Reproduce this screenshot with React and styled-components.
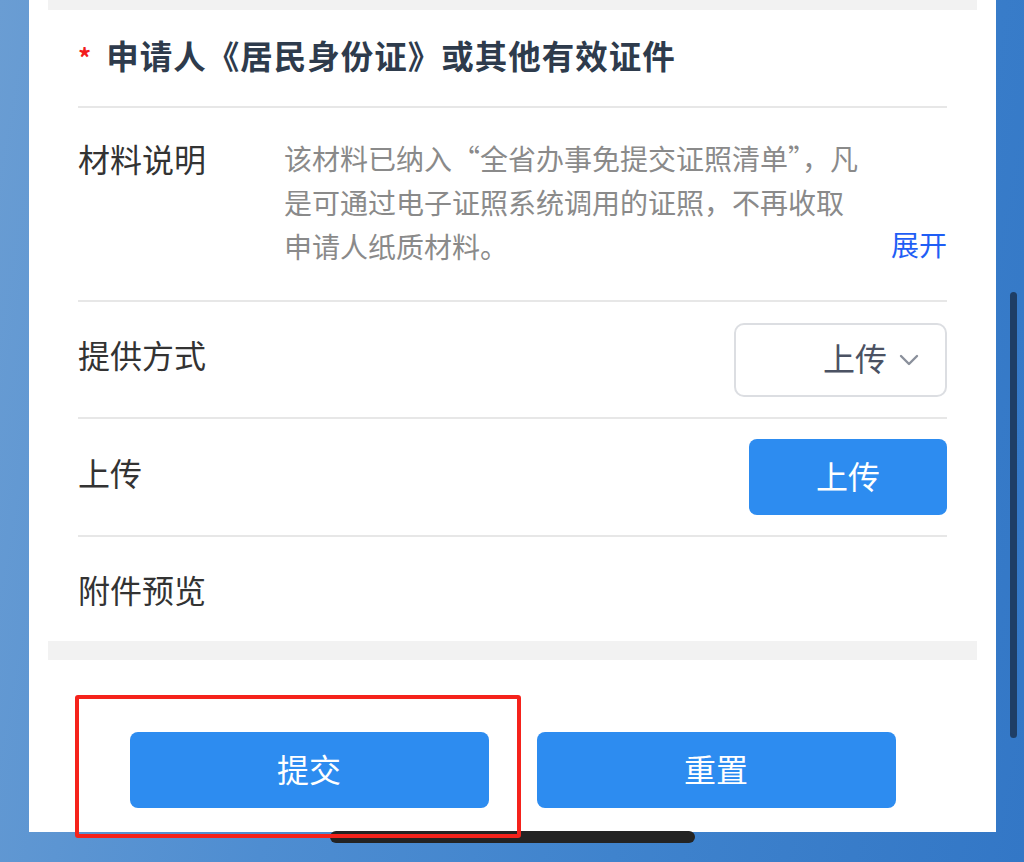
import React from "react";
import styled, { createGlobalStyle } from "styled-components";

const Global = createGlobalStyle`
  html, body { margin: 0; padding: 0; }
  body {
    font-family: "Noto Sans CJK SC", "Noto Sans", sans-serif;
    overflow: hidden;
  }
  * { box-sizing: border-box; }
`;

const Screen = styled.div`
  position: relative;
  width: 1024px;
  height: 862px;
  overflow: hidden;
  padding: 0 28px 0 29px;
  background: linear-gradient(100deg, #6a9dd3 0%, #4e8dd1 35%, #3f83cd 65%, #3377c6 100%);
`;

const Panel = styled.div`
  width: 967px;
  height: 832px;
  background: #ffffff;
  padding: 0 19px;
  display: flex;
  flex-direction: column;
`;

const Band = styled.div`
  height: ${(p) => p.$h}px;
  background: #f2f2f2;
  flex: none;
`;

const Card = styled.div`
  padding: 0 30px;
  display: flex;
  flex-direction: column;
`;

const TitleRow = styled.div`
  height: 96px;
  display: flex;
  align-items: center;
  gap: 15px;
  padding: 0 0 8px 0;
`;

const Star = styled.span`
  color: #f21b1b;
  font-size: 26px;
  font-weight: 700;
  line-height: 1;
  margin-top: 6px;
`;

const Title = styled.h2`
  margin: 0;
  font-size: 32.5px;
  font-weight: 700;
  color: #2e3b4c;
  letter-spacing: 1px;
  line-height: 1.2;
`;

const Divider = styled.div`
  height: 2px;
  background: #e7e7e7;
  flex: none;
`;

const Row = styled.div`
  display: flex;
  align-items: ${(p) => (p.$top ? "flex-start" : "center")};
  justify-content: space-between;
  height: ${(p) => (p.$h ? `${p.$h}px` : "auto")};
  padding: ${(p) => p.$pad || "0"};
`;

const Label = styled.div`
  width: 206px;
  flex: none;
  font-size: 32px;
  line-height: 44px;
  color: #333333;
  margin-top: ${(p) => (p.$lift ? `-${p.$lift * 2}px` : "0")};
`;

const DescWrap = styled.div`
  flex: 1;
  display: flex;
  align-items: flex-end;
  justify-content: space-between;
`;

const Desc = styled.p`
  margin: 0;
  width: 584px;
  font-size: 28px;
  line-height: 44px;
  color: #8a8a8a;
`;

const More = styled.span`
  font-size: 28px;
  line-height: 44px;
  color: #1f5ef5;
  margin-bottom: 2px;
`;

const Select = styled.div`
  width: 213px;
  height: 74px;
  border: 2px solid #dcdee2;
  border-radius: 10px;
  display: flex;
  align-items: center;
  justify-content: flex-end;
  gap: 12px;
  padding: 0 26px 6px 0;
  font-size: 32px;
  color: #4b5263;
`;

const Button = styled.button`
  width: ${(p) => p.$w}px;
  height: 76px;
  border: none;
  border-radius: 8px;
  background: #2d8cf0;
  color: #ffffff;
  font-family: "Noto Sans CJK SC", sans-serif;
  font-size: 32px;
  padding: 0 0 5px 0;
  cursor: pointer;
`;

const Actions = styled.div`
  display: flex;
  justify-content: center;
  gap: 48px;
  padding-top: 72px;
`;

const Highlight = styled.div`
  position: absolute;
  left: 75px;
  top: 695px;
  width: 446px;
  height: 143px;
  border: 4px solid #f5221b;
  border-radius: 3px;
  z-index: 3;
`;

const HomeBar = styled.div`
  position: absolute;
  left: 330px;
  top: 831px;
  width: 365px;
  height: 12px;
  border-radius: 6px;
  background: #232323;
  z-index: 2;
`;

const ScrollThumb = styled.div`
  position: absolute;
  left: 1010px;
  top: 292px;
  width: 7px;
  height: 446px;
  border-radius: 4px;
  background: #1e3e66;
`;

const Chevron = () => (
  <svg width="20" height="12" viewBox="0 0 20 12" fill="none" style={{ marginTop: 6 }}>
    <polyline points="2,2 10,10 18,2" stroke="#8a909b" strokeWidth="2.4" strokeLinecap="round" strokeLinejoin="round" />
  </svg>
);

export default function App() {
  return (
    <>
      <Global />
      <Screen>
        <Panel>
          <Band $h={10} />
          <Card>
            <TitleRow>
              <Star>*</Star>
              <Title>申请人《居民身份证》或其他有效证件</Title>
            </TitleRow>
            <Divider />
            <Row $top $pad="28px 0 32px 0">
              <Label>材料说明</Label>
              <DescWrap>
                <Desc>该材料已纳入“全省办事免提交证照清单”，凡是可通过电子证照系统调用的证照，不再收取申请人纸质材料。</Desc>
                <More>展开</More>
              </DescWrap>
            </Row>
            <Divider />
            <Row $h={115}>
              <Label $lift={6}>提供方式</Label>
              <Select>
                <span>上传</span>
                <Chevron />
              </Select>
            </Row>
            <Divider />
            <Row $h={116}>
              <Label $lift={5}>上传</Label>
              <Button $w={198}>上传</Button>
            </Row>
            <Divider />
            <Row $h={104}>
              <Label>附件预览</Label>
            </Row>
          </Card>
          <Band $h={19} />
          <Actions>
            <Button $w={359}>提交</Button>
            <Button $w={359}>重置</Button>
          </Actions>
        </Panel>
        <Highlight />
        <HomeBar />
        <ScrollThumb />
      </Screen>
    </>
  );
}
